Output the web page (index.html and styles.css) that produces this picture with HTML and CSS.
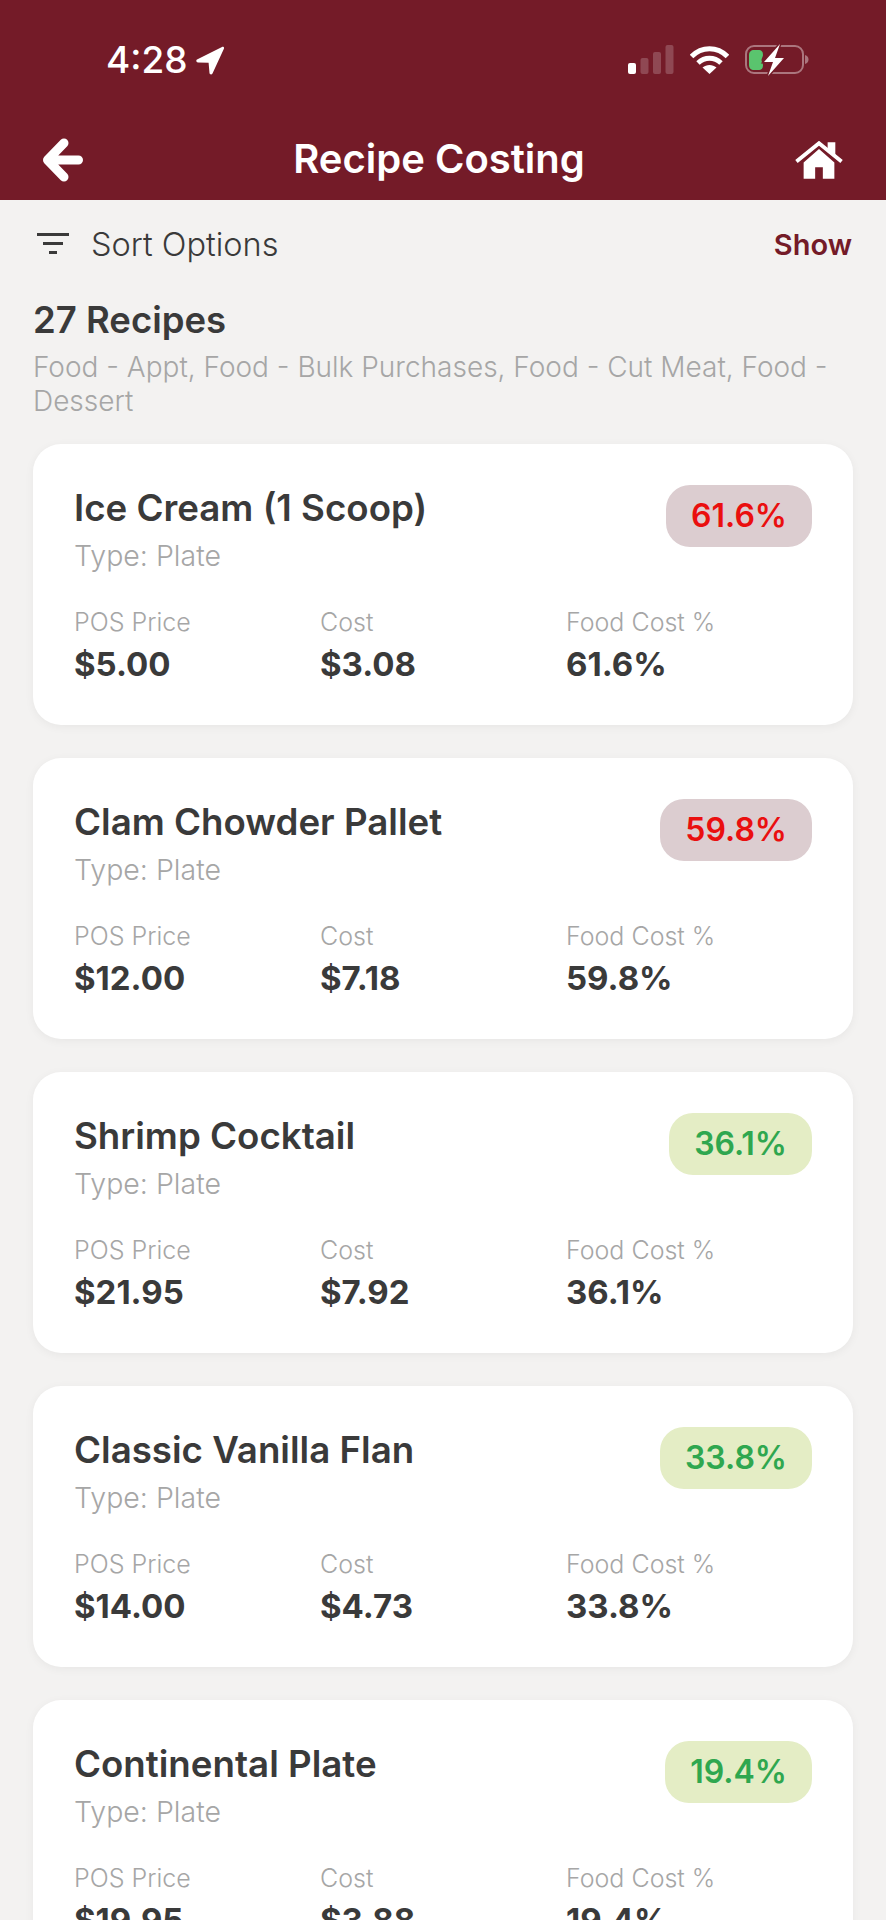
FILE: index.html
```html
<!DOCTYPE html>
<html lang="en">
<head>
    <meta charset="UTF-8">
    <meta name="viewport" content="width=device-width, initial-scale=1.0">
    <title>Recipe Costing</title>
    <link rel="stylesheet" href="styles.css">
</head>
<body>
    <header class="top-bar">
        <div class="status-bar">
            <div class="status-time">
                <span>4:28</span>
                <svg class="icon-location" viewBox="0 0 29 29"><path d="M1 13.500 26 1c1.300-.6 2.500.5 1.900 1.800L16.500 27.500c-.8 1.500-2.800 1.200-3-.5l-.9-10.200L2 16.500c-1.700-.1-2.300-2.200-1-3z" fill="#fff"/></svg>
            </div>
            <div class="status-icons">
                <svg class="icon-signal" viewBox="0 0 46 29">
                    <rect x="0" y="18" width="8" height="11" rx="2" fill="#fff"/>
                    <rect x="12.500" y="13" width="8" height="16" rx="2" fill="#fff" opacity=".2"/>
                    <rect x="25" y="7" width="8" height="22" rx="2" fill="#fff" opacity=".2"/>
                    <rect x="37.500" y="0" width="8" height="29" rx="2" fill="#fff" opacity=".2"/>
                </svg>
                <svg class="icon-wifi" viewBox="0 0 39 29">
                    <path d="M1.500 11.500C11.500 1 27.500 1 37.500 11.500" fill="none" stroke="#fff" stroke-width="5"/>
                    <path d="M8 18c6.800-6.300 16.200-6.300 23 0" fill="none" stroke="#fff" stroke-width="5"/>
                    <path d="M19.500 29l-7-6.500c4-3.500 10-3.500 14 0z" fill="#fff"/>
                </svg>
                <svg class="icon-battery" viewBox="0 0 64 32">
                    <rect x="1" y="2" width="57" height="27" rx="8" fill="none" stroke="#fff" stroke-width="2" opacity=".4"/>
                    <path d="M60 11c2.500.6 3.500 2.500 3.500 4.500s-1 3.900-3.500 4.500z" fill="#fff" opacity=".4"/>
                    <path d="M9 6h4c4 0 5 2 5 5 0 2-1.500 3-1.500 5s1.500 3 1.500 5c0 3-1 5-5 5H9c-3 0-5-2-5-5V11c0-3 2-5 5-5z" fill="#5ac46e"/>
                    <path class="bolt" d="M35 0 19 18h9l-5 14 16-18h-9z"/>
                </svg>
            </div>
        </div>
        <div class="nav-bar">
            <svg class="icon-back" viewBox="0 0 40 44"><path d="M21 5 4.500 22 21 39M6 22h29.500" fill="none" stroke="#fff" stroke-width="9" stroke-linecap="round" stroke-linejoin="round"/></svg>
            <h1>Recipe Costing</h1>
            <svg class="icon-home" viewBox="0 0 50 40">
                <path d="M9 22 25 8l16 14v17H29V27h-8v12H9z" fill="#fff"/>
                <path d="M1.500 21 25 2l23.500 19" fill="none" stroke="#fff" stroke-width="4"/>
                <path d="M34 1h8v14l-8-7z" fill="#fff"/>
            </svg>
        </div>
    </header>

    <main class="content">
        <div class="sort-row">
            <div class="sort-label">
                <svg class="icon-filter" viewBox="0 0 32 22"><path d="M0 1.500h32M6 10.500h20M12 19.500h8" fill="none" stroke="#3a3a3a" stroke-width="3"/></svg>
                <span>Sort Options</span>
            </div>
            <span class="sort-toggle">Show</span>
        </div>

        <div class="summary">
            <h2>27 Recipes</h2>
            <p>Food - Appt, Food - Bulk Purchases, Food - Cut Meat, Food - Dessert</p>
        </div>

        <div class="recipe-list">
            <article class="recipe-card">
                <div class="card-head">
                    <div>
                        <h3>Ice Cream (1 Scoop)</h3>
                        <p class="recipe-type">Type: Plate</p>
                    </div>
                    <span class="badge badge-high">61.6%</span>
                </div>
                <div class="stats">
                    <div><span class="stat-label">POS Price</span><strong>$5.00</strong></div>
                    <div><span class="stat-label">Cost</span><strong>$3.08</strong></div>
                    <div><span class="stat-label">Food Cost %</span><strong>61.6%</strong></div>
                </div>
            </article>
            <article class="recipe-card">
                <div class="card-head">
                    <div>
                        <h3>Clam Chowder Pallet</h3>
                        <p class="recipe-type">Type: Plate</p>
                    </div>
                    <span class="badge badge-high">59.8%</span>
                </div>
                <div class="stats">
                    <div><span class="stat-label">POS Price</span><strong>$12.00</strong></div>
                    <div><span class="stat-label">Cost</span><strong>$7.18</strong></div>
                    <div><span class="stat-label">Food Cost %</span><strong>59.8%</strong></div>
                </div>
            </article>
            <article class="recipe-card">
                <div class="card-head">
                    <div>
                        <h3>Shrimp Cocktail</h3>
                        <p class="recipe-type">Type: Plate</p>
                    </div>
                    <span class="badge badge-low">36.1%</span>
                </div>
                <div class="stats">
                    <div><span class="stat-label">POS Price</span><strong>$21.95</strong></div>
                    <div><span class="stat-label">Cost</span><strong>$7.92</strong></div>
                    <div><span class="stat-label">Food Cost %</span><strong>36.1%</strong></div>
                </div>
            </article>
            <article class="recipe-card">
                <div class="card-head">
                    <div>
                        <h3>Classic Vanilla Flan</h3>
                        <p class="recipe-type">Type: Plate</p>
                    </div>
                    <span class="badge badge-low">33.8%</span>
                </div>
                <div class="stats">
                    <div><span class="stat-label">POS Price</span><strong>$14.00</strong></div>
                    <div><span class="stat-label">Cost</span><strong>$4.73</strong></div>
                    <div><span class="stat-label">Food Cost %</span><strong>33.8%</strong></div>
                </div>
            </article>
            <article class="recipe-card">
                <div class="card-head">
                    <div>
                        <h3>Continental Plate</h3>
                        <p class="recipe-type">Type: Plate</p>
                    </div>
                    <span class="badge badge-low">19.4%</span>
                </div>
                <div class="stats">
                    <div><span class="stat-label">POS Price</span><strong>$19.95</strong></div>
                    <div><span class="stat-label">Cost</span><strong>$3.88</strong></div>
                    <div><span class="stat-label">Food Cost %</span><strong>19.4%</strong></div>
                </div>
            </article>
        </div>
    </main>
</body>
</html>
```

FILE: styles.css
```css
* {
    box-sizing: border-box;
}

html, body {
    margin: 0;
    height: 1920px;
    overflow: hidden;
}

body {
    font-family: Inter, "Liberation Sans", sans-serif;
    background-color: #f3f2f1;
    color: #3a3a3a;
}

h1, h2, h3, p {
    margin: 0;
}

.top-bar {
    height: 200px;
    background-color: #741b28;
    color: #fff;
}

.status-bar {
    height: 120px;
    padding: 42px 77px 0 106px;
    display: flex;
    justify-content: space-between;
    align-items: flex-start;
}

.status-time {
    display: flex;
    align-items: center;
    gap: 8px;
    font-size: 37px;
    font-weight: 500;
    line-height: 36px;
}

.icon-location {
    width: 29px;
    height: 29px;
}

.status-icons {
    display: flex;
    align-items: flex-start;
    gap: 16px;
    padding-top: 3px;
}

.icon-signal {
    width: 46px;
    height: 29px;
}

.icon-wifi {
    width: 39px;
    height: 29px;
}

.icon-battery {
    width: 64px;
    height: 32px;
    margin-top: -1px;
}

.bolt {
    fill: #fff;
    stroke: #741b28;
    stroke-width: 3px;
    paint-order: stroke;
}

.nav-bar {
    height: 80px;
    padding: 0 43px;
    display: flex;
    justify-content: space-between;
    align-items: center;
}

.nav-bar h1 {
    font-size: 40px;
    font-weight: 600;
    color: #fff;
    padding-bottom: 4px;
}

.icon-back {
    width: 40px;
    height: 44px;
}

.icon-home {
    width: 48px;
    height: 39px;
}

.content {
    padding: 0 33px;
}

.sort-row {
    height: 88px;
    padding: 0 1px 0 4px;
    display: flex;
    justify-content: space-between;
    align-items: center;
}

.sort-label {
    display: flex;
    align-items: center;
    gap: 22px;
    font-size: 32.500px;
    font-weight: 300;
}

.icon-filter {
    width: 32px;
    height: 22px;
}

.sort-toggle {
    font-size: 29px;
    font-weight: 600;
    color: #741b28;
}

.summary {
    padding-top: 10px;
    padding-bottom: 26px;
}

.summary h2 {
    font-size: 36.500px;
    font-weight: 600;
    line-height: 44px;
}

.summary p {
    margin-top: 8px;
    font-size: 28px;
    line-height: 34px;
    font-weight: 300;
    color: #a6a6a6;
}

.recipe-list {
    display: flex;
    flex-direction: column;
    gap: 33px;
}

.recipe-card {
    flex: none;
    padding: 41px 41px 41px;
    background-color: #fff;
    border-radius: 28px;
    box-shadow: 0 2px 10px rgba(0, 0, 0, 0.05);
}

.card-head {
    display: flex;
    justify-content: space-between;
    align-items: flex-start;
}

.card-head h3 {
    font-size: 36.700px;
    font-weight: 600;
    line-height: 46px;
}

.recipe-type {
    margin-top: 8px;
    font-size: 28.500px;
    font-weight: 300;
    line-height: 34px;
    color: #a6a6a6;
}

.badge {
    padding: 0 25px;
    height: 62px;
    border-radius: 24px;
    font-size: 32px;
    font-weight: 600;
    line-height: 62px;
}

.badge-high {
    background-color: #dccdd0;
    color: #ea0f0f;
}

.badge-low {
    background-color: #e4edc5;
    color: #2fa74f;
}

.stats {
    margin-top: 33px;
    display: grid;
    grid-template-columns: 246px 246px 1fr;
}

.stat-label {
    display: block;
    font-size: 25px;
    font-weight: 300;
    line-height: 32px;
    color: #a6a6a6;
}

.stats strong {
    display: block;
    margin-top: 6px;
    font-size: 33px;
    font-weight: 700;
    line-height: 40px;
}
```
